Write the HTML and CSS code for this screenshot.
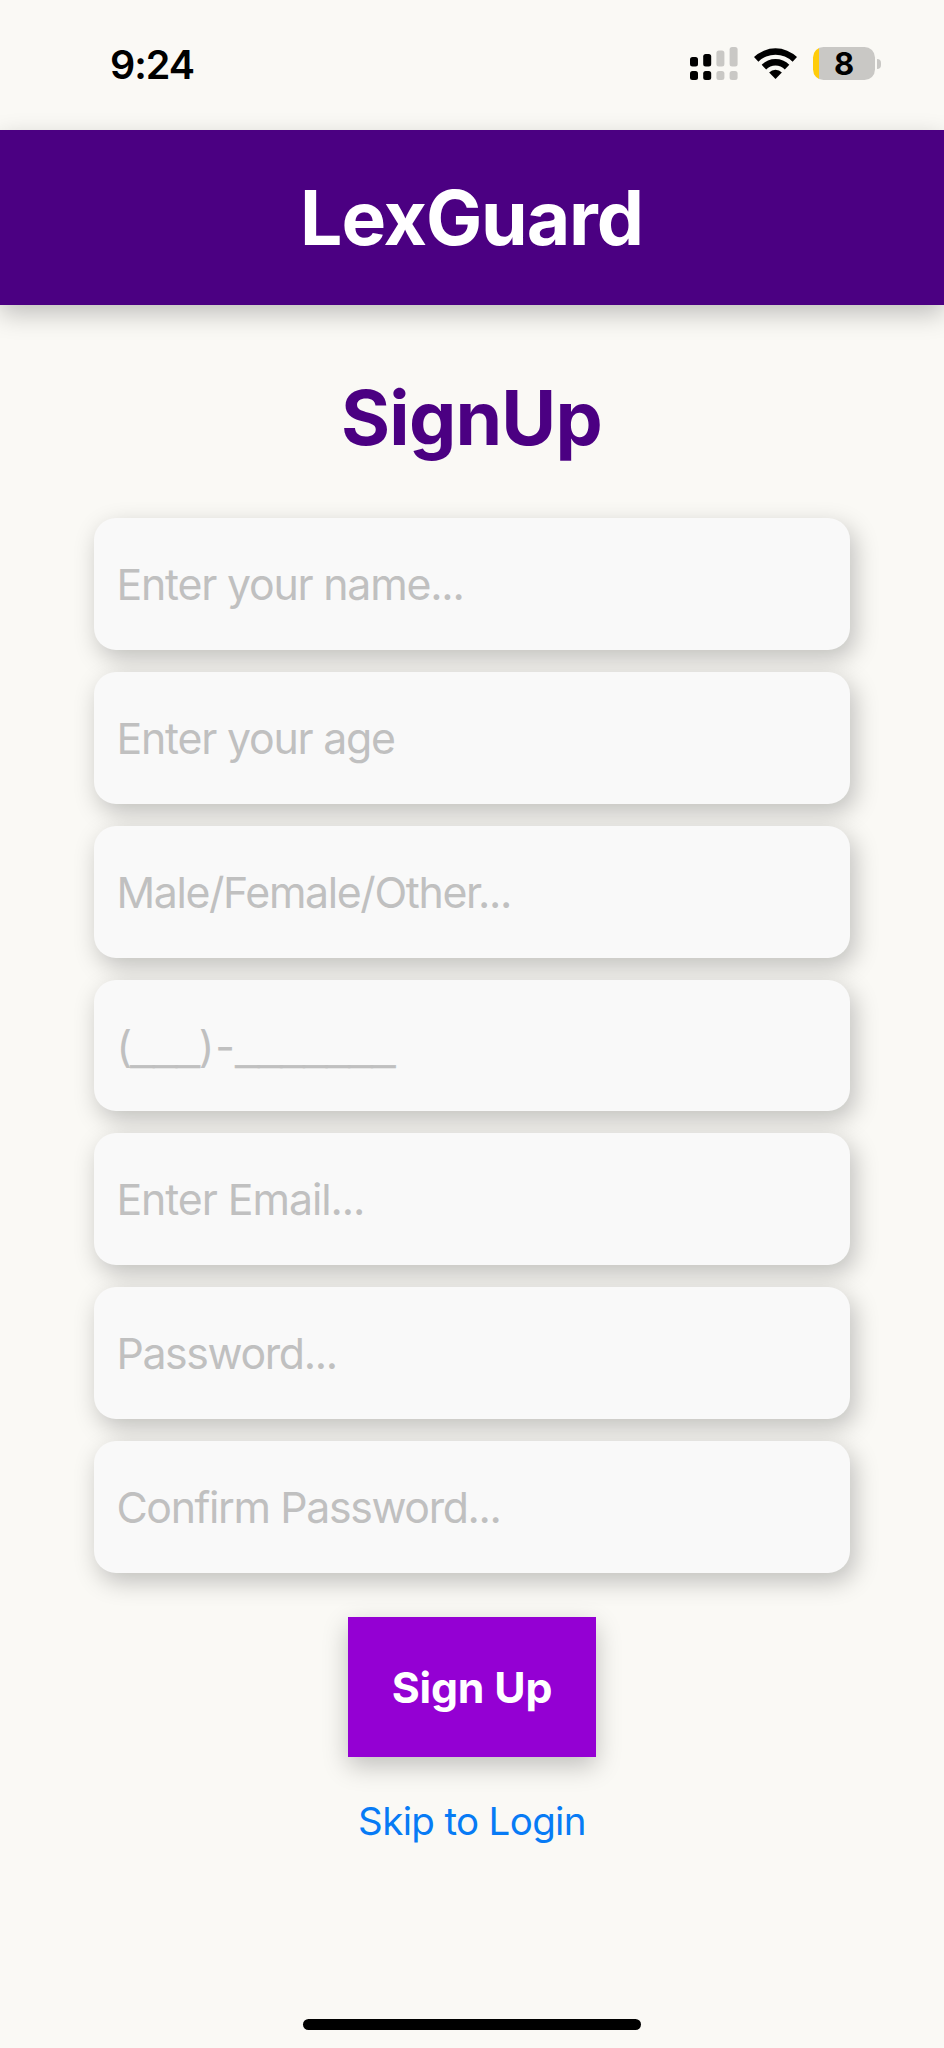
FILE: index.html
```html
<!DOCTYPE html>
<html lang="en">
<head>
<meta charset="utf-8">
<title>LexGuard</title>
<link rel="stylesheet" href="styles.css">
</head>
<body>
<div class="screen">
  <div class="status">
    <span class="time">9:24</span>
    <div class="indicators">
      <svg class="signal" width="48" height="34" viewBox="0 0 48 34">
        <g fill="#000">
          <rect x="0" y="10" width="8" height="9.5" rx="2.5"/>
          <rect x="0" y="24" width="8" height="9" rx="2.5"/>
          <rect x="13.2" y="7" width="8" height="12.5" rx="2.5"/>
          <rect x="13.2" y="24" width="8" height="9" rx="2.5"/>
        </g>
        <g fill="#c9c8c5">
          <rect x="26.4" y="3.5" width="8" height="16" rx="2.5"/>
          <rect x="26.4" y="24" width="8" height="9" rx="2.5"/>
          <rect x="39.6" y="0" width="8" height="19.5" rx="2.5"/>
          <rect x="39.6" y="24" width="8" height="9" rx="2.5"/>
        </g>
      </svg>
      <svg class="wifi" width="43" height="31" viewBox="0 0 42 31" preserveAspectRatio="none">
        <path d="M0 9.1a29.6 29.6 0 0 1 42 0l-4.3 4.6a23.3 23.3 0 0 0-33.4 0z"/>
        <path d="M7.5 16.8a18.8 18.8 0 0 1 27 0l-4.4 4.6a12.8 12.8 0 0 0-18.2 0z"/>
        <path d="M14.8 24.5a8.6 8.6 0 0 1 12.4 0L21 31z"/>
      </svg>
      <div class="battery">
        <span class="cell">8</span>
        <span class="nub"></span>
      </div>
    </div>
  </div>
  <header class="header"><h1 class="brand">LexGuard</h1></header>
  <main class="content">
    <h2 class="title">SignUp</h2>
    <form class="form">
      <input class="field" type="text" placeholder="Enter your name...">
      <input class="field" type="text" placeholder="Enter your age">
      <input class="field tight" type="text" placeholder="Male/Female/Other...">
      <div class="field phone">(<span class="blank">___</span>)<span class="dash">-</span><span class="blank">_______</span></div>
      <input class="field loose" type="text" placeholder="Enter Email...">
      <input class="field tight" type="text" placeholder="Password...">
      <input class="field tight" type="text" placeholder="Confirm Password...">
      <button class="submit" type="button">Sign Up</button>
      <a class="skip">Skip to Login</a>
    </form>
  </main>
  <div class="home"></div>
</div>
</body>
</html>
```

FILE: styles.css
```css
* { box-sizing: border-box; }

body {
  margin: 0;
  background: #faf9f5;
  font-family: Inter, "Liberation Sans", sans-serif;
}

.screen {
  display: flex;
  flex-direction: column;
  height: 2048px;
  overflow: hidden;
}

.status {
  display: flex;
  justify-content: space-between;
  height: 129.5px;
  flex: none;
  padding: 47px 63px 0 110px;
}

.time {
  height: 36px;
  line-height: 36px;
  font-size: 39.5px;
  font-weight: 600;
  letter-spacing: -1px;
}

.indicators { display: flex; align-items: flex-start; }
.signal { margin-right: 16px; }
.wifi { margin: 1px 16px 0 0; }
.battery { display: flex; align-items: center; gap: 2px; }

.cell {
  width: 62px;
  height: 33px;
  border-radius: 10.5px;
  background: linear-gradient(90deg, #ffcc0a 5.5px, #c9c8c5 5.5px);
  font-size: 31px;
  font-weight: 700;
  line-height: 33px;
  text-align: center;
}

.nub {
  width: 4px;
  height: 10px;
  border-radius: 0 4px 4px 0;
  background: #c9c8c5;
}

.header {
  display: flex;
  align-items: center;
  justify-content: center;
  flex: none;
  height: 175.5px;
  padding-top: 2px;
  background: #4b0082;
  box-shadow: 0 9px 24px rgba(0, 0, 0, .23);
}

.brand, .title {
  margin: 0;
  font-size: 75px;
  font-weight: 700;
  line-height: 90px;
}

.brand { color: #fff; letter-spacing: -1.1px; padding-right: 1px; }
.title { color: #4b0082; margin-bottom: 55.5px; letter-spacing: -.8px; padding-right: 1px; }

.content {
  display: flex;
  flex-direction: column;
  align-items: center;
  padding-top: 67.5px;
}

.form {
  display: flex;
  flex-direction: column;
  align-items: center;
  width: 80%;
}

.field {
  width: 100%;
  height: 131.85px;
  margin: 0 0 22px;
  padding: 1px 22px 0;
  border: 0;
  border-radius: 22px;
  background: #f9f9f9;
  box-shadow: 4.4px 8.8px 24px rgba(0, 0, 0, .23);
  font-family: inherit;
  font-size: 42.8px;
  letter-spacing: -1.2px;
}

.field::placeholder { color: #c0c0c0; opacity: 1; }
.tight { letter-spacing: -1.35px; }
.loose { letter-spacing: -1.05px; }

.phone {
  display: flex;
  align-items: baseline;
  line-height: 131px;
  color: #c0c0c0;
}

.blank {
  padding-bottom: 2px;
  font-family: "Liberation Sans", sans-serif;
  font-size: 42px;
  letter-spacing: -.7px;
  transform: translateY(-2px);
  -webkit-text-stroke: .6px #c0c0c0;
}

.dash { margin: 0 2px; }

.submit {
  width: 248.5px;
  height: 140.5px;
  margin: 22px 0 37.5px;
  padding: 1.5px 0 0;
  border: 0;
  background: #9400d3;
  box-shadow: 0 8.8px 24px rgba(0, 0, 0, .23);
  color: #fff;
  font-family: inherit;
  font-size: 42.8px;
  font-weight: 700;
  letter-spacing: -.15px;
}

.skip {
  font-size: 38.5px;
  line-height: 52px;
  letter-spacing: -.65px;
  color: #077bf5;
}

.home {
  width: 338px;
  height: 11px;
  margin: auto auto 18px;
  border-radius: 6px;
  background: #000;
}
```
